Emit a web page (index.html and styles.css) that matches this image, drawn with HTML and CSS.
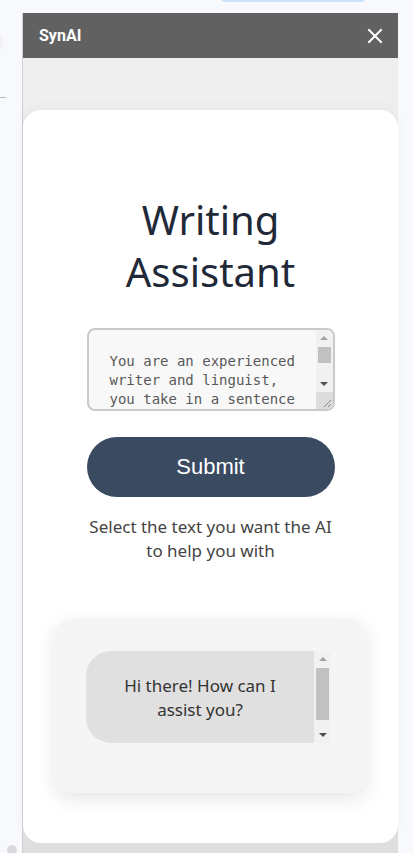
FILE: index.html
```html
<!DOCTYPE html>
<html lang="en">
<head>
<meta charset="utf-8">
<title>SynAI</title>
<link rel="stylesheet" href="styles.css">
</head>
<body>
<div class="page">
  <div class="top-pill"></div>
  <div class="ghost-circle"></div>
  <div class="ghost-line"></div>
  <div class="ghost-dot"></div>
</div>
<aside class="panel">
  <header class="panel-header">
    <span class="brand">SynAI</span>
    <svg class="close" width="16" height="16" viewBox="0 0 16 16" aria-label="Close">
      <path d="M2 2 L14 14 M14 2 L2 14" stroke="#fff" stroke-width="2" stroke-linecap="square"/>
    </svg>
  </header>
  <div class="panel-body">
    <main class="card">
      <h1 class="title">Writing Assistant</h1>
      <div class="prompt-box">
        <textarea class="prompt">You are an experienced writer and linguist, you take in a sentence and rewrite it to be clearer, more concise and more engaging for the reader.</textarea>
        <div class="sb">
          <div class="sb-btn"><svg width="8" height="4" viewBox="0 0 8 4"><polygon points="0,4 8,4 4,0" fill="#a3a3a3"/></svg></div>
          <div class="sb-track"><div class="sb-thumb thumb-prompt"></div></div>
          <div class="sb-btn"><svg width="8" height="4" viewBox="0 0 8 4"><polygon points="0,0 8,0 4,4" fill="#505050"/></svg></div>
          <div class="sb-resizer"><svg width="17" height="17" viewBox="0 0 17 17"><path d="M15 8 L8 15 M15 12 L12 15" stroke="#8a8a8a" stroke-width="1"/></svg></div>
        </div>
      </div>
      <button class="submit">Submit</button>
      <p class="hint">Select the text you want the AI to help you with</p>
      <section class="chat">
        <div class="chat-box">
          <div class="bubble">Hi there! How can I assist you?</div>
          <div class="sb">
            <div class="sb-btn"><svg width="8" height="4" viewBox="0 0 8 4"><polygon points="0,4 8,4 4,0" fill="#a3a3a3"/></svg></div>
            <div class="sb-track"><div class="sb-thumb thumb-chat"></div></div>
            <div class="sb-btn"><svg width="8" height="4" viewBox="0 0 8 4"><polygon points="0,0 8,0 4,4" fill="#505050"/></svg></div>
          </div>
        </div>
      </section>
    </main>
  </div>
</aside>
</body>
</html>
```
FILE: styles.css
```css
html, body {
  margin: 0;
  padding: 0;
  height: 100%;
}
body {
  background: #f8f9fc;
  font-family: "Noto Sans", sans-serif;
  overflow: hidden;
}
.page {
  height: 100%;
}
.top-pill {
  position: absolute;
  left: 221px;
  top: -6px;
  width: 144px;
  height: 8px;
  border-radius: 4px;
  background: #c7e4fb;
}
.ghost-circle {
  position: absolute;
  left: -22px;
  top: 30px;
  width: 25px;
  height: 25px;
  border-radius: 50%;
  background: #f1f2f6;
}
.ghost-line {
  position: absolute;
  left: 0;
  top: 97px;
  width: 6px;
  height: 1px;
  background: #b9bbc0;
}
.ghost-dot {
  position: absolute;
  left: 7px;
  top: 845px;
  width: 10px;
  height: 10px;
  border-radius: 50%;
  background: #d9dadd;
}
.panel {
  position: fixed;
  left: 22px;
  top: 13px;
  width: 376px;
  bottom: 0;
  display: flex;
  flex-direction: column;
  border-left: 1px solid #cfcfcf;
  box-sizing: border-box;
}
.panel-header {
  height: 45px;
  flex: none;
  background: #616161;
  display: flex;
  align-items: center;
  justify-content: space-between;
  padding: 0 15px 0 16px;
}
.brand {
  font-family: Roboto, "Liberation Sans", sans-serif;
  font-weight: 700;
  font-size: 16px;
  color: #fff;
}
.close {
  display: block;
}
.panel-body {
  flex: 1;
  background: linear-gradient(#efefef 0%, #e9e9e9 85%, #dedede 100%);
  padding: 52px 0 10px 0;
  display: flex;
  flex-direction: column;
  min-height: 0;
}
.card {
  flex: 1;
  background: #fff;
  border-radius: 18px;
  box-shadow: 0 -4px 12px rgba(0,0,0,0.03);
  display: flex;
  flex-direction: column;
  align-items: center;
  padding: 84px 0 0 0;
}
.title {
  margin: 0;
  width: 200px;
  text-align: center;
  font-weight: 400;
  font-size: 40px;
  line-height: 52px;
  color: #1f2937;
}
.prompt-box {
  margin-top: 30px;
  width: 248px;
  height: 83px;
  box-sizing: border-box;
  border: 2px solid #cacaca;
  border-radius: 8px;
  background: #f8f8f8;
  display: flex;
  overflow: hidden;
}
.prompt {
  flex: 1;
  min-width: 0;
  margin: 0;
  border: none;
  outline: none;
  resize: none;
  background: transparent;
  padding: 22px 10px 0 21px;
  font-family: "DejaVu Sans Mono", monospace;
  font-size: 14px;
  line-height: 19px;
  color: #595959;
  overflow: hidden;
}
.sb {
  flex: none;
  width: 17px;
  background: #f1f1f1;
  display: flex;
  flex-direction: column;
}
.sb-btn {
  height: 16px;
  flex: none;
  display: flex;
  align-items: center;
  justify-content: center;
}
.sb-btn svg, .sb-resizer svg {
  display: block;
}
.sb-track {
  flex: 1;
  padding: 1px 2px;
}
.sb-thumb {
  background: #c1c1c1;
}
.thumb-prompt {
  height: 16px;
}
.thumb-chat {
  height: 52px;
}
.sb-resizer {
  height: 17px;
  flex: none;
  background: #dcdcdc;
}
.submit {
  margin-top: 26px;
  width: 248px;
  height: 60px;
  border: none;
  border-radius: 30px;
  background: #3a4a61;
  color: #fff;
  font-family: "Liberation Sans", Arial, sans-serif;
  font-size: 22px;
}
.hint {
  margin: 18px 0 0 0;
  width: 252px;
  text-align: center;
  font-size: 17px;
  line-height: 24px;
  color: #444;
}
.chat {
  margin-top: 56px;
  width: 313px;
  box-sizing: border-box;
  padding: 32px 36px 50px 32px;
  background: #f5f5f5;
  border-radius: 18px;
  box-shadow: 0 6px 20px rgba(0,0,0,0.10);
}
.chat-box {
  height: 92px;
  display: flex;
  border-radius: 25px 0 0 25px;
  overflow: hidden;
}
.bubble {
  flex: 1;
  background: #e0e0e0;
  padding: 23px 24px 0 24px;
  text-align: center;
  font-size: 17px;
  line-height: 24px;
  color: #333;
}
```
